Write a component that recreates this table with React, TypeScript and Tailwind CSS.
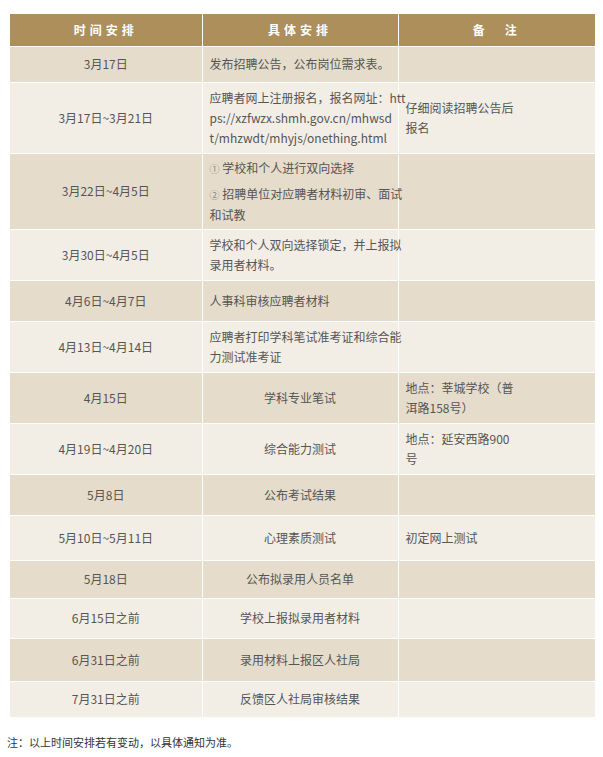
const font = { fontFamily: '"Noto Sans CJK SC", "Noto Sans", sans-serif' };

type Row = {
  date: string;
  detail: React.ReactNode;
  note?: React.ReactNode;
  center?: boolean;
  h: string;
};

const rows: Row[] = [
  { date: "3月17日", detail: "发布招聘公告，公布岗位需求表。", h: "h-[36px]" },
  {
    date: "3月17日~3月21日",
    detail: (
      <>
        应聘者网上注册报名，报名网址：htt
        <br />
        ps://xzfwzx.shmh.gov.cn/mhwsd
        <br />
        t/mhzwdt/mhyjs/onething.html
      </>
    ),
    note: (
      <>
        仔细阅读招聘公告后
        <br />
        报名
      </>
    ),
    h: "h-[71px]",
  },
  {
    date: "3月22日~4月5日",
    detail: (
      <>
        <p>
          <span className="text-[10px] text-[#888]">①</span> 学校和个人进行双向选择
        </p>
        <p className="mt-[5px]">
          <span className="text-[10px] text-[#888]">②</span> 招聘单位对应聘者材料初审、面试
          <br />
          和试教
        </p>
      </>
    ),
    h: "h-[76px]",
  },
  {
    date: "3月30日~4月5日",
    detail: (
      <>
        学校和个人双向选择锁定，并上报拟
        <br />
        录用者材料。
      </>
    ),
    h: "h-[51px]",
  },
  { date: "4月6日~4月7日", detail: "人事科审核应聘者材料", h: "h-[41px]" },
  {
    date: "4月13日~4月14日",
    detail: (
      <>
        应聘者打印学科笔试准考证和综合能
        <br />
        力测试准考证
      </>
    ),
    h: "h-[51px]",
  },
  {
    date: "4月15日",
    detail: "学科专业笔试",
    center: true,
    note: (
      <>
        地点：莘城学校（普
        <br />
        洱路158号）
      </>
    ),
    h: "h-[51px]",
  },
  {
    date: "4月19日~4月20日",
    detail: "综合能力测试",
    center: true,
    note: (
      <>
        地点：延安西路900
        <br />号
      </>
    ),
    h: "h-[51px]",
  },
  { date: "5月8日", detail: "公布考试结果", center: true, h: "h-[41px]" },
  { date: "5月10日~5月11日", detail: "心理素质测试", center: true, note: "初定网上测试", h: "h-[45px]" },
  { date: "5月18日", detail: "公布拟录用人员名单", center: true, h: "h-[38px]" },
  { date: "6月15日之前", detail: "学校上报拟录用者材料", center: true, h: "h-[40px]" },
  { date: "6月31日之前", detail: "录用材料上报区人社局", center: true, h: "h-[43px]" },
  { date: "7月31日之前", detail: "反馈区人社局审核结果", center: true, h: "h-[36px]" },
];

export default function App() {
  return (
    <div className="w-[603px] bg-white pt-[14px]" style={font}>
      <table className="ml-[10px] w-[585px] table-fixed border-collapse text-[12px] leading-[20px] text-[#555]">
        <colgroup>
          <col className="w-[192px]" />
          <col className="w-[196px]" />
          <col className="w-[197px]" />
        </colgroup>
        <thead>
          <tr className="h-[32px] bg-[#ad8f5b] text-white font-bold text-[12px]">
            <th className="border border-white border-t-0 border-l-0 text-center tracking-[4px]">时间安排</th>
            <th className="border border-white border-t-0 text-center tracking-[4px]">具体安排</th>
            <th className="border border-white border-t-0 border-r-0 text-center tracking-[4px]">备　注</th>
          </tr>
        </thead>
        <tbody>
          {rows.map((r, i) => (
            <tr
              key={i}
              className={`${r.h} ${i % 2 === 0 ? "bg-[#e6dccb]" : "bg-[#f2eee6]"} ${
                i === rows.length - 1 ? "border-b border-[#dcdcdc]" : ""
              }`}
            >
              <td className="border border-white border-l-0 text-center align-middle">{r.date}</td>
              <td
                className={`border border-white px-[7px] align-middle whitespace-nowrap ${
                  r.center ? "text-center" : "text-left"
                }`}
              >
                {r.detail}
              </td>
              <td className="border border-white border-r-0 px-[7px] align-middle whitespace-nowrap">{r.note}</td>
            </tr>
          ))}
        </tbody>
      </table>
      <p className="mt-[14px] pl-[7px] pb-[10px] text-[11px] leading-[20px] text-[#333]">
        注：以上时间安排若有变动，以具体通知为准。
      </p>
    </div>
  );
}
